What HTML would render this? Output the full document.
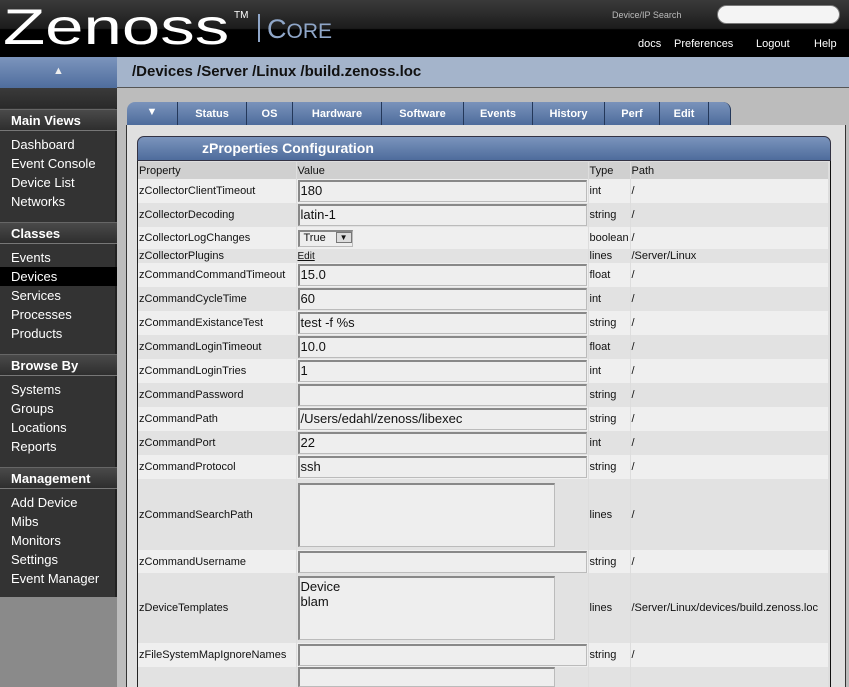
<!DOCTYPE html>
<html><head><style>
*{margin:0;padding:0;box-sizing:border-box}
body{width:849px;height:687px;overflow:hidden;background:#bcbcbc;font-family:"Liberation Sans",sans-serif;position:relative}
.a{position:absolute}
#hdr{left:0;top:0;width:849px;height:57px;background:linear-gradient(#3a3a3a,#1c1c1c 50%,#000 52%,#000)}
#logo{left:3px;top:-1px;color:#fff;font-size:50px;line-height:57px;font-family:"Liberation Sans",sans-serif;transform:scaleX(1.38);transform-origin:0 0}
#core{left:267px;top:14px;color:#8fa6c8;font-size:27px}
#sb{left:0;top:57px;width:117px;height:540px;background:#333}
.sh{position:absolute;left:0;width:117px;height:22px;background:linear-gradient(#4a4a4a,#2e2e2e);border-top:1px solid #666;border-bottom:1px solid #777;color:#fff;font-weight:bold;font-size:13px;padding:3px 0 0 11px}
.si{position:absolute;left:11px;color:#fff;font-size:13px}
td{font-size:11px;color:#111;padding:0 0 0 1px;border-right:1px solid #ddd;vertical-align:middle;white-space:nowrap;overflow:hidden}
tr:nth-child(odd){background:#e2e2e2}
tr:nth-child(even){background:#efefef}
.in{height:22px;border:1px solid #bbb;border-top:2px solid #888;border-left:2px solid #888;background:#eee;font-size:13px;padding:1px 1px;width:289px}
.tab{position:absolute;top:102px;height:23px;color:#fff;font-weight:bold;font-size:11px;text-align:center;padding-top:6px;background:linear-gradient(#7a93bb,#4d6c9c);border-right:1px solid #24385a}
</style></head><body>
<div id="hdr" class="a"></div>
<div id="logo" class="a">Zenoss</div>
<div class="a" style="left:234px;top:10px;color:#fff;font-size:10px">TM</div>
<div class="a" style="left:258px;top:14px;width:2px;height:28px;background:#8fa6c8"></div>
<div id="core" class="a">C<span style="font-size:21px">ORE</span></div>
<div class="a" style="left:612px;top:10px;color:#bbb;font-size:9px">Device/IP Search</div>
<div class="a" style="left:717px;top:5px;width:123px;height:19px;border-radius:10px;background:#f4f4f4;border:1px solid #777"></div>
<div class="a" style="left:638px;top:38px;color:#fff;font-size:11px">docs</div>
<div class="a" style="left:674px;top:38px;color:#fff;font-size:11px">Preferences</div>
<div class="a" style="left:756px;top:38px;color:#fff;font-size:11px">Logout</div>
<div class="a" style="left:814px;top:38px;color:#fff;font-size:11px">Help</div>
<div class="a" style="left:0;top:57px;width:117px;height:31px;background:linear-gradient(#7c95bd,#4f6d9d);color:#eee;text-align:center;font-size:11px;padding-top:8px">▲</div>
<div class="a" style="left:117px;top:57px;width:732px;height:31px;background:#a4b4cb;border-bottom:1px solid #555"></div>
<div class="a" style="left:132px;top:63px;font-size:15px;font-weight:bold;color:#111">/Devices /Server /Linux /build.zenoss.loc</div>
<div class="a" style="left:0;top:597px;width:117px;height:90px;background:#8a8a8a"></div>
<div id="sb" class="a" style="top:88px;height:509px;background:#333;border-right:2px solid #222">
<div style="position:absolute;left:0;top:0;width:117px;height:20px;background:linear-gradient(#3a3a3a,#2a2a2a)"></div>
<div class="sh" style="top:21px">Main Views</div>
<div class="si" style="top:49px">Dashboard</div><div class="si" style="top:68px">Event Console</div><div class="si" style="top:87px">Device List</div><div class="si" style="top:106px">Networks</div>
<div class="sh" style="top:134px">Classes</div>
<div class="si" style="top:162px">Events</div>
<div style="position:absolute;left:0;top:179px;width:117px;height:19px;background:#000"></div>
<div class="si" style="top:181px">Devices</div><div class="si" style="top:200px">Services</div><div class="si" style="top:219px">Processes</div><div class="si" style="top:238px">Products</div>
<div class="sh" style="top:266px">Browse By</div>
<div class="si" style="top:294px">Systems</div><div class="si" style="top:313px">Groups</div><div class="si" style="top:332px">Locations</div><div class="si" style="top:351px">Reports</div>
<div class="sh" style="top:379px">Management</div>
<div class="si" style="top:407px">Add Device</div><div class="si" style="top:426px">Mibs</div><div class="si" style="top:445px">Monitors</div><div class="si" style="top:464px">Settings</div><div class="si" style="top:483px">Event Manager</div>
</div>
<div class="a" style="left:126px;top:125px;width:720px;height:562px;background:#e0e0e0;border-left:1px solid #333;border-right:1px solid #333"></div>
<div class="tab" style="left:127px;width:51px;border-radius:8px 0 0 0;padding-top:4px">▼</div>
<div class="tab" style="left:178px;width:69px">Status</div>
<div class="tab" style="left:247px;width:46px">OS</div>
<div class="tab" style="left:293px;width:89px">Hardware</div>
<div class="tab" style="left:382px;width:82px">Software</div>
<div class="tab" style="left:464px;width:69px">Events</div>
<div class="tab" style="left:533px;width:72px">History</div>
<div class="tab" style="left:605px;width:55px">Perf</div>
<div class="tab" style="left:660px;width:49px">Edit</div>
<div class="tab" style="left:709px;width:22px;border-radius:0 8px 0 0"></div>
<div class="a" style="left:137px;top:136px;width:694px;height:25px;border-radius:7px 7px 0 0;background:linear-gradient(#7b94bc,#4e6c9c);border:1px solid #334;color:#fff;font-weight:bold;font-size:14px;padding:3px 0 0 64px">zProperties Configuration</div>
<div class="a" style="left:137px;top:161px;width:694px;height:526px;background:#ddd;border-left:1px solid #222;border-right:1px solid #111"></div>
<table class="a" style="left:138px;top:162px;width:691px;border-collapse:collapse;table-layout:fixed">
<colgroup><col style="width:158px"><col style="width:292px"><col style="width:42px"><col></colgroup>
<tr style="height:17px;background:#d0d0d0"><td>Property</td><td>Value</td><td>Type</td><td>Path</td></tr>
<tr style="height:24px"><td>zCollectorClientTimeout</td><td><div class="in">180</div></td><td>int</td><td>/</td></tr>
<tr style="height:24px"><td>zCollectorDecoding</td><td><div class="in">latin-1</div></td><td>string</td><td>/</td></tr>
<tr style="height:22px"><td>zCollectorLogChanges</td><td><div class="in" style="width:55px;height:17px;font-size:11px;padding:0 0 0 4px">True <span style="float:right;background:#ddd;border:1px solid #777;font-size:8px;padding:0 3px">▼</span></div></td><td>boolean</td><td>/</td></tr>
<tr style="height:14px"><td>zCollectorPlugins</td><td style="text-decoration:underline;font-size:10px">Edit</td><td>lines</td><td>/Server/Linux</td></tr>
<tr style="height:24px"><td>zCommandCommandTimeout</td><td><div class="in">15.0</div></td><td>float</td><td>/</td></tr>
<tr style="height:24px"><td>zCommandCycleTime</td><td><div class="in">60</div></td><td>int</td><td>/</td></tr>
<tr style="height:24px"><td>zCommandExistanceTest</td><td><div class="in">test -f %s</div></td><td>string</td><td>/</td></tr>
<tr style="height:24px"><td>zCommandLoginTimeout</td><td><div class="in">10.0</div></td><td>float</td><td>/</td></tr>
<tr style="height:24px"><td>zCommandLoginTries</td><td><div class="in">1</div></td><td>int</td><td>/</td></tr>
<tr style="height:24px"><td>zCommandPassword</td><td><div class="in"></div></td><td>string</td><td>/</td></tr>
<tr style="height:24px"><td>zCommandPath</td><td><div class="in">/Users/edahl/zenoss/libexec</div></td><td>string</td><td>/</td></tr>
<tr style="height:24px"><td>zCommandPort</td><td><div class="in">22</div></td><td>int</td><td>/</td></tr>
<tr style="height:24px"><td>zCommandProtocol</td><td><div class="in">ssh</div></td><td>string</td><td>/</td></tr>
<tr style="height:71px"><td>zCommandSearchPath</td><td><div class="in" style="width:257px;height:64px"></div></td><td>lines</td><td>/</td></tr>
<tr style="height:23px"><td>zCommandUsername</td><td><div class="in"></div></td><td>string</td><td>/</td></tr>
<tr style="height:70px"><td>zDeviceTemplates</td><td><div class="in" style="width:257px;height:64px;line-height:15px">Device<br>blam</div></td><td>lines</td><td>/Server/Linux/devices/build.zenoss.loc</td></tr>
<tr style="height:24px"><td>zFileSystemMapIgnoreNames</td><td><div class="in"></div></td><td>string</td><td>/</td></tr>
<tr style="height:20px"><td></td><td><div class="in" style="width:257px;height:20px"></div></td><td></td><td></td></tr>
</table>
</body></html>
